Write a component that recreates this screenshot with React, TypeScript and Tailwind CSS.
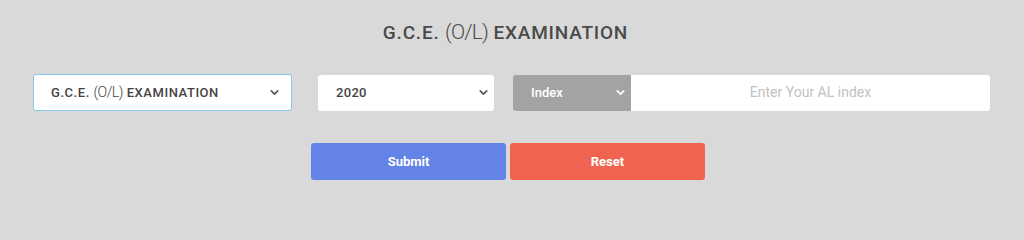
import { ChevronDown } from "lucide-react";

const font = { fontFamily: "Roboto, 'Liberation Sans', sans-serif" };

const Paren = ({ children }: { children: string }) => (
  <span className="font-light text-[1.1em] tracking-[-0.04em]">{children}</span>
);

const App = () => {
  return (
    <div className="w-full min-h-screen bg-[#d9d9d9] flex flex-col" style={font}>
      <h1 className="pt-[19px] pr-[13px] text-center text-[19px] font-medium tracking-[0.8px] text-[#4a4a4a] leading-[26px]">
        G.C.E. <Paren>(O/L)</Paren> EXAMINATION
      </h1>

      <div className="flex items-center mt-[28px] pl-[33px]">
        <div className="w-[259px] h-[37px] bg-white border border-[#86c7ec] rounded-[3px] flex items-center justify-between pl-[17px] pr-[10px] text-[13px] font-medium tracking-[0.55px] text-[#444]">
          <span>
            G.C.E. <Paren>(O/L)</Paren> EXAMINATION
          </span>
          <ChevronDown className="w-[13px] h-[13px] text-[#555]" strokeWidth={3} />
        </div>
        <div className="ml-[26px] w-[176px] h-[36px] bg-white rounded-[3px] flex items-center justify-between pl-[18px] pr-[2px] text-[13px] font-medium tracking-[0.3px] text-[#444]">
          <span>2020</span>
          <ChevronDown className="w-[13px] h-[13px] text-[#555] mr-[2px]" strokeWidth={3} />
        </div>
        <div className="ml-[19px] flex h-[36px]">
          <div className="w-[118px] bg-[#a3a3a3] rounded-l-[3px] flex items-center justify-between pl-[18px] pr-[4px] text-[13px] font-medium text-white">
            <span>Index</span>
            <ChevronDown className="w-[13px] h-[13px] text-white" strokeWidth={3} />
          </div>
          <div className="w-[359px] bg-white rounded-r-[3px] flex items-center justify-center text-[14px] text-[#c2c2c2]">
            Enter Your AL index
          </div>
        </div>
      </div>

      <div className="flex justify-center gap-[4px] mt-[32px] pr-[8px]">
        <button className="w-[195px] h-[37px] rounded-[3px] bg-[#6383e6] text-white text-[13px] font-bold">
          Submit
        </button>
        <button className="w-[195px] h-[37px] rounded-[3px] bg-[#ef6350] text-white text-[13px] font-bold">
          Reset
        </button>
      </div>
    </div>
  );
};

export default App;
